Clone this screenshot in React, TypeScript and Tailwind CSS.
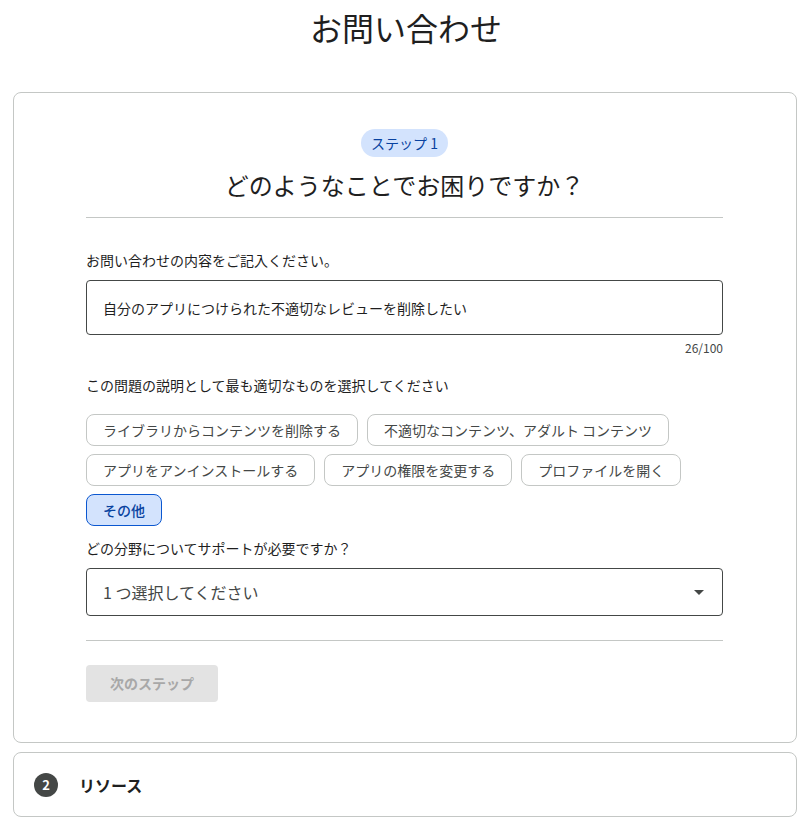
import React, { useState } from 'react';

const chips = [
  'ライブラリからコンテンツを削除する',
  '不適切なコンテンツ、アダルト コンテンツ',
  'アプリをアンインストールする',
  'アプリの権限を変更する',
  'プロファイルを開く',
  'その他',
];

export default function App() {
  const [text, setText] = useState('自分のアプリにつけられた不適切なレビューを削除したい');
  const [selected, setSelected] = useState('その他');

  return (
    <div className="min-h-screen bg-white text-[#1f1f1f] font-['Noto_Sans_CJK_JP','Noto_Sans',sans-serif]">
      <div className="pt-[7px] text-center">
        <h1 className="text-[32px] leading-[40px] font-normal">お問い合わせ</h1>
      </div>

      <div className="ml-[13px] mr-[15px] mt-[45px] rounded-lg border border-[#c4c7c5] pl-[72px] pr-[73px] pt-[36px] pb-[40px]">
        <div className="flex justify-center">
          <span className="flex h-[28px] items-center rounded-full bg-[#d3e3fd] px-[10px] text-[14px] text-[#0842a0]">
            ステップ 1
          </span>
        </div>
        <h2 className="mt-[12px] text-center text-[24px] leading-[32px] font-normal">
          どのようなことでお困りですか？
        </h2>
        <div className="mt-[16px] h-px bg-[#c4c7c5]" />

        <p className="mt-[32px] text-[14px] leading-[20px]">お問い合わせの内容をご記入ください。</p>
        <input
          value={text}
          onChange={(e) => setText(e.target.value)}
          className="mt-[10px] block h-[55px] w-full rounded border border-[#444746] px-4 text-[14px] text-[#1f1f1f] outline-none"
        />
        <p className="mt-[5px] text-right text-[12px] leading-[16px] text-[#444746]">{text.length}/100</p>

        <p className="mt-[19px] text-[14px] leading-[20px]">この問題の説明として最も適切なものを選択してください</p>
        <div className="mt-[19px] flex flex-wrap gap-x-[9px] gap-y-[8px]">
          {chips.map((c) => (
            <button
              key={c}
              onClick={() => setSelected(c)}
              className={
                c === selected
                  ? 'h-[32px] rounded-lg border border-[#0b57d0] bg-[#d3e3fd] px-4 text-[14px] font-medium text-[#0842a0]'
                  : 'h-[32px] rounded-lg border border-[#c4c7c5] bg-white px-4 text-[14px] text-[#444746]'
              }
            >
              {c}
            </button>
          ))}
        </div>

        <p className="mt-[12px] text-[14px] leading-[20px]">どの分野についてサポートが必要ですか？</p>
        <div className="mt-[10px] flex h-[48px] items-center justify-between rounded border border-[#444746] pl-4 pr-[18px]">
          <span className="text-[16px] text-[#444746]">1 つ選択してください</span>
          <svg width="10" height="5" viewBox="0 0 10 5" className="text-[#444746]">
            <path d="M0 0h10L5 5z" fill="currentColor" />
          </svg>
        </div>

        <div className="mt-[24px] h-px bg-[#c4c7c5]" />

        <button
          disabled
          className="mt-[24px] h-[37px] rounded bg-[#e3e3e3] px-6 text-[14px] font-bold text-[#a8a8a8]"
        >
          次のステップ
        </button>
      </div>

      <div className="ml-[13px] mr-[15px] mt-[9px] flex h-[65px] items-center gap-[21px] rounded-lg border border-[#c4c7c5] pl-[20px]">
        <span className="flex h-[24px] w-[24px] items-center justify-center rounded-full bg-[#444746] text-[13px] font-bold text-white">
          2
        </span>
        <span className="text-[16px] font-bold">リソース</span>
      </div>
    </div>
  );
}
